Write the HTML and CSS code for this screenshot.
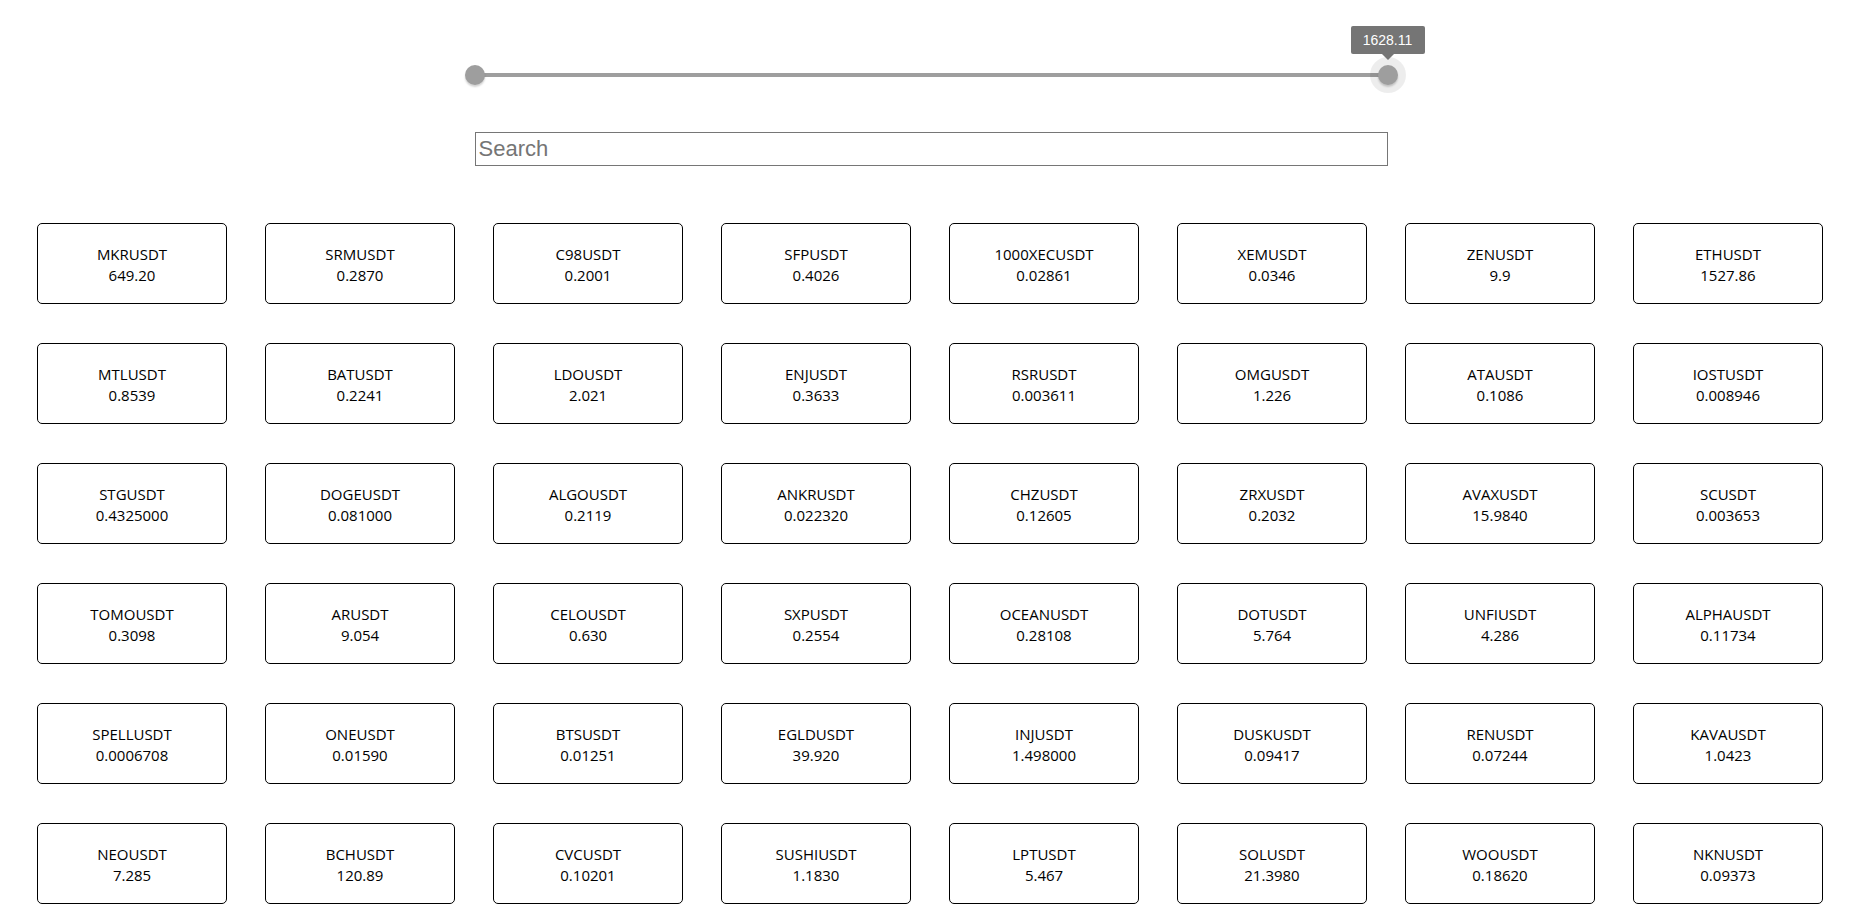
FILE: index.html
```html
<!DOCTYPE html>
<html lang="en">
<head>
<meta charset="utf-8">
<title>Prices</title>
<link rel="stylesheet" href="styles.css">
</head>
<body>
<div class="top">
  <div class="slider">
    <div class="track"></div>
    <div class="thumb thumb-left"></div>
    <div class="thumb thumb-right">
      <div class="label">1628.11</div>
    </div>
  </div>
  <input class="search" type="text" placeholder="Search">
</div>
<div class="grid">
  <div class="card"><span>MKRUSDT</span><span>649.20</span></div>
  <div class="card"><span>SRMUSDT</span><span>0.2870</span></div>
  <div class="card"><span>C98USDT</span><span>0.2001</span></div>
  <div class="card"><span>SFPUSDT</span><span>0.4026</span></div>
  <div class="card"><span>1000XECUSDT</span><span>0.02861</span></div>
  <div class="card"><span>XEMUSDT</span><span>0.0346</span></div>
  <div class="card"><span>ZENUSDT</span><span>9.9</span></div>
  <div class="card"><span>ETHUSDT</span><span>1527.86</span></div>

  <div class="card"><span>MTLUSDT</span><span>0.8539</span></div>
  <div class="card"><span>BATUSDT</span><span>0.2241</span></div>
  <div class="card"><span>LDOUSDT</span><span>2.021</span></div>
  <div class="card"><span>ENJUSDT</span><span>0.3633</span></div>
  <div class="card"><span>RSRUSDT</span><span>0.003611</span></div>
  <div class="card"><span>OMGUSDT</span><span>1.226</span></div>
  <div class="card"><span>ATAUSDT</span><span>0.1086</span></div>
  <div class="card"><span>IOSTUSDT</span><span>0.008946</span></div>

  <div class="card"><span>STGUSDT</span><span>0.4325000</span></div>
  <div class="card"><span>DOGEUSDT</span><span>0.081000</span></div>
  <div class="card"><span>ALGOUSDT</span><span>0.2119</span></div>
  <div class="card"><span>ANKRUSDT</span><span>0.022320</span></div>
  <div class="card"><span>CHZUSDT</span><span>0.12605</span></div>
  <div class="card"><span>ZRXUSDT</span><span>0.2032</span></div>
  <div class="card"><span>AVAXUSDT</span><span>15.9840</span></div>
  <div class="card"><span>SCUSDT</span><span>0.003653</span></div>

  <div class="card"><span>TOMOUSDT</span><span>0.3098</span></div>
  <div class="card"><span>ARUSDT</span><span>9.054</span></div>
  <div class="card"><span>CELOUSDT</span><span>0.630</span></div>
  <div class="card"><span>SXPUSDT</span><span>0.2554</span></div>
  <div class="card"><span>OCEANUSDT</span><span>0.28108</span></div>
  <div class="card"><span>DOTUSDT</span><span>5.764</span></div>
  <div class="card"><span>UNFIUSDT</span><span>4.286</span></div>
  <div class="card"><span>ALPHAUSDT</span><span>0.11734</span></div>

  <div class="card"><span>SPELLUSDT</span><span>0.0006708</span></div>
  <div class="card"><span>ONEUSDT</span><span>0.01590</span></div>
  <div class="card"><span>BTSUSDT</span><span>0.01251</span></div>
  <div class="card"><span>EGLDUSDT</span><span>39.920</span></div>
  <div class="card"><span>INJUSDT</span><span>1.498000</span></div>
  <div class="card"><span>DUSKUSDT</span><span>0.09417</span></div>
  <div class="card"><span>RENUSDT</span><span>0.07244</span></div>
  <div class="card"><span>KAVAUSDT</span><span>1.0423</span></div>

  <div class="card"><span>NEOUSDT</span><span>7.285</span></div>
  <div class="card"><span>BCHUSDT</span><span>120.89</span></div>
  <div class="card"><span>CVCUSDT</span><span>0.10201</span></div>
  <div class="card"><span>SUSHIUSDT</span><span>1.1830</span></div>
  <div class="card"><span>LPTUSDT</span><span>5.467</span></div>
  <div class="card"><span>SOLUSDT</span><span>21.3980</span></div>
  <div class="card"><span>WOOUSDT</span><span>0.18620</span></div>
  <div class="card"><span>NKNUSDT</span><span>0.09373</span></div>
</div>
</body>
</html>
```

FILE: styles.css
```css
html, body {
  margin: 0;
  padding: 0;
  background: #ffffff;
  overflow: hidden;
}

body {
  font-family: "Open Sans", "Noto Sans", sans-serif;
  color: #000;
}

.top {
  width: 913px;
  margin: 0 auto;
  padding-top: 65px;
  display: flex;
  flex-direction: column;
}

.slider {
  position: relative;
  height: 20px;
}

.track {
  position: absolute;
  left: 0;
  right: 0;
  top: 8px;
  height: 4px;
  border-radius: 2px;
  background: #9e9e9e;
}

.thumb {
  position: absolute;
  top: 0;
  width: 20px;
  height: 20px;
  border-radius: 50%;
  background: #9e9e9e;
  box-shadow: 0 2px 2px rgba(0, 0, 0, 0.18);
}

.thumb-left {
  left: -10px;
}

.thumb-right {
  right: -10px;
  box-shadow: 0 0 0 8px rgba(0, 0, 0, 0.07), 0 2px 2px rgba(0, 0, 0, 0.18);
}

.label {
  position: absolute;
  left: 50%;
  bottom: 31px;
  transform: translateX(-50%);
  width: 74px;
  height: 28px;
  box-sizing: border-box;
  background: #757575;
  color: #fff;
  border-radius: 2px;
  font-family: "Liberation Sans", Arial, sans-serif;
  font-size: 14px;
  line-height: 28px;
  text-align: center;
}

.label::after {
  content: "";
  position: absolute;
  left: 50%;
  top: 100%;
  transform: translateX(-50%);
  border-left: 6px solid transparent;
  border-right: 6px solid transparent;
  border-top: 6px solid #757575;
}

.search {
  margin-top: 47px;
  width: 100%;
  height: 34px;
  box-sizing: border-box;
  border: 1px solid #767676;
  border-radius: 0;
  padding: 1px 3px;
  font-family: "Liberation Sans", Arial, sans-serif;
  font-size: 22px;
  color: #000;
  outline: none;
}

.search::placeholder {
  color: #757575;
}

.grid {
  width: 1786px;
  margin: 57px 0 0 37px;
  display: grid;
  grid-template-columns: repeat(8, 190px);
  column-gap: 38px;
  row-gap: 39px;
}

.card {
  height: 81px;
  box-sizing: border-box;
  border: 1px solid #000;
  border-radius: 5px;
  padding-top: 2px;
  display: flex;
  flex-direction: column;
  align-items: center;
  justify-content: center;
  font-size: 15px;
  line-height: 21px;
}
```
